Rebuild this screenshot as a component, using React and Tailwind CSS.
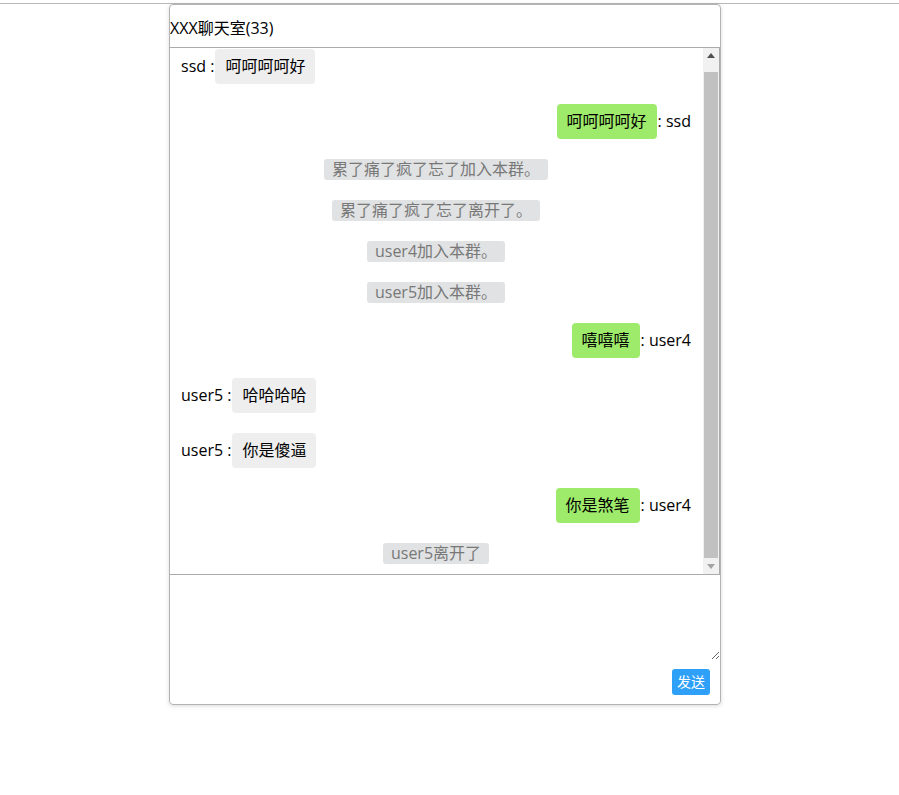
import React from "react";

const messages = [
  { type: "left", name: "ssd", text: "呵呵呵呵好" },
  { type: "right", name: "ssd", text: "呵呵呵呵好" },
  { type: "sys", text: "累了痛了疯了忘了加入本群。" },
  { type: "sys", text: "累了痛了疯了忘了离开了。" },
  { type: "sys", text: "user4加入本群。" },
  { type: "sys", text: "user5加入本群。" },
  { type: "right", name: "user4", text: "嘻嘻嘻" },
  { type: "left", name: "user5", text: "哈哈哈哈" },
  { type: "left", name: "user5", text: "你是傻逼" },
  { type: "right", name: "user4", text: "你是煞笔" },
  { type: "sys", text: "user5离开了" },
];

function Row({ m }) {
  if (m.type === "sys") {
    return (
      <div className="flex justify-center">
        <span className="bg-[#e1e2e3] text-[#787878] px-[8px] leading-[21px] rounded-[3px]">
          {m.text}
        </span>
      </div>
    );
  }
  if (m.type === "left") {
    return (
      <div className="flex items-center">
        <span className="leading-[23px]">{m.name} :</span>
        <span className="ml-[1px] bg-[#eeeeee] px-[10px] py-[6px] leading-[23px] rounded-[4px]">
          {m.text}
        </span>
      </div>
    );
  }
  return (
    <div className="flex items-center justify-end">
      <span className="bg-[#9eea6a] px-[10px] py-[6px] leading-[23px] rounded-[4px]">
        {m.text}
      </span>
      <span className="ml-[1px] leading-[23px]">: {m.name}</span>
    </div>
  );
}

export default function App() {
  return (
    <div
      className="bg-white text-black text-[16px] min-h-[795px]"
      style={{ fontFamily: '"Open Sans", "Noto Sans CJK SC", sans-serif' }}
    >
      <div className="h-[4px] border-b border-[#b8b8b8]" />
      <div className="ml-[169px] w-[552px] border border-[#b3b3b3] rounded-[4px] shadow-[0_1px_4px_rgba(0,0,0,0.15)] flex flex-col overflow-hidden">
        <div className="h-[42px] pt-[13px] leading-[21px]">XXX聊天室(33)</div>
        <div className="h-[528px] flex border-y border-r border-[#ababab]">
          <div className="flex-1 overflow-hidden pl-[11px] pr-[12px] pt-[1px] flex flex-col gap-[20px]">
            {messages.map((m, i) => (
              <Row key={i} m={m} />
            ))}
          </div>
          <div className="w-[16px] bg-[#f1f1f1] flex flex-col">
            <div className="h-[15px] flex items-center justify-center">
              <svg width="8" height="5" viewBox="0 0 8 5">
                <polygon points="0,5 8,5 4,0" fill="#505050" />
              </svg>
            </div>
            <div className="h-[9px]" />
            <div className="h-[486px] mx-[1px] bg-[#c1c1c1]" />
            <div className="flex-1" />
            <div className="h-[15px] flex items-center justify-center">
              <svg width="8" height="5" viewBox="0 0 8 5">
                <polygon points="0,0 8,0 4,5" fill="#a3a3a3" />
              </svg>
            </div>
          </div>
        </div>
        <textarea className="h-[85px] w-full border-0 outline-none block p-1 text-[14px]" />
        <div className="flex justify-end pt-[9px] pb-[9px] pr-[10px]">
          <button className="h-[26px] px-[5px] bg-[#2ea0f8] text-white text-[14px] leading-[26px] rounded-[3px]">
            发送
          </button>
        </div>
      </div>
    </div>
  );
}
